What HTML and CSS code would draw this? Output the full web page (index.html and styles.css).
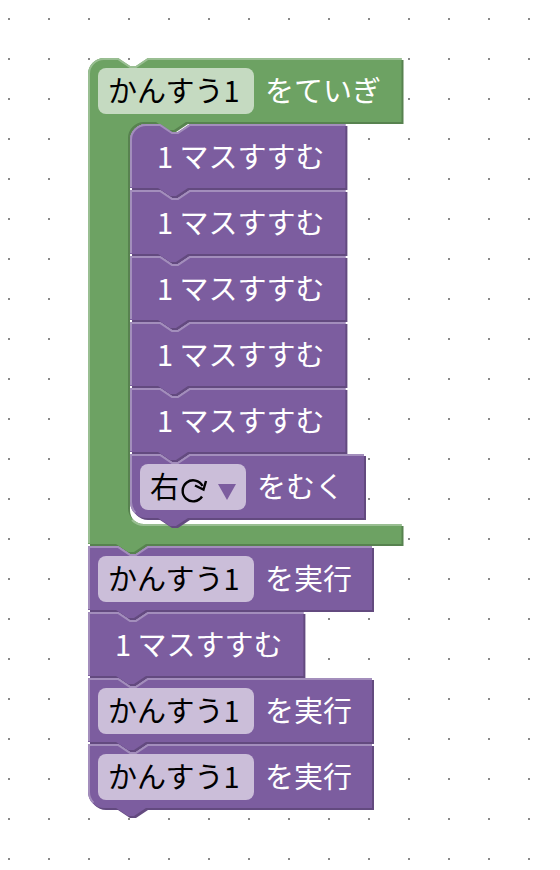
FILE: index.html
```html
<!DOCTYPE html>
<html lang="ja">
<head>
<meta charset="utf-8">
<meta name="viewport" content="width=device-width, initial-scale=1">
<title>ブロック</title>
<link rel="stylesheet" href="styles.css">
</head>
<body>
<svg class="defs" aria-hidden="true">
  <defs>
    <g id="step">
      <path class="dark" transform="translate(2 2)" d="M0 0H30l12 8h6l12-8H215.4V64H58l-12 8h-6l-12-8H0z"/>
      <path class="main" d="M0 0H30l12 8h6l12-8H215.4V64H58l-12 8h-6l-12-8H0z"/>
      <path class="light" d="M1 63V1H30l12 8h6l12-8H215.4"/>
    </g>
    <g id="step-first">
      <path class="dark" transform="translate(2 2)" d="M0 16A16 16 0 0 1 16 0H30l12 8h6l12-8H215.4V64H58l-12 8h-6l-12-8H0z"/>
      <path class="main" d="M0 16A16 16 0 0 1 16 0H30l12 8h6l12-8H215.4V64H58l-12 8h-6l-12-8H0z"/>
      <path class="light" d="M1 63V16A15 15 0 0 1 16 1H30l12 8h6l12-8H215.4"/>
    </g>
    <g id="turn-last">
      <path class="dark" transform="translate(2 2)" d="M0 0H30l12 8h6l12-8H234V64H58l-12 8h-6l-12-8H16A16 16 0 0 1 0 48z"/>
      <path class="main" d="M0 0H30l12 8h6l12-8H234V64H58l-12 8h-6l-12-8H16A16 16 0 0 1 0 48z"/>
      <path class="light" d="M5.4 58.6A15 15 0 0 1 1 48V1H30l12 8h6l12-8H234"/>
    </g>
    <g id="call">
      <path class="dark" transform="translate(2 2)" d="M0 0H30l12 8h6l12-8H284V64H58l-12 8h-6l-12-8H0z"/>
      <path class="main" d="M0 0H30l12 8h6l12-8H284V64H58l-12 8h-6l-12-8H0z"/>
      <path class="light" d="M1 63V1H30l12 8h6l12-8H284"/>
    </g>
    <g id="call-last">
      <path class="dark" transform="translate(2 2)" d="M0 0H30l12 8h6l12-8H284V64H58l-12 8h-6l-12-8H16A16 16 0 0 1 0 48z"/>
      <path class="main" d="M0 0H30l12 8h6l12-8H284V64H58l-12 8h-6l-12-8H16A16 16 0 0 1 0 48z"/>
      <path class="light" d="M5.4 58.6A15 15 0 0 1 1 48V1H30l12 8h6l12-8H284"/>
    </g>
    <g id="define">
      <path class="dark" transform="translate(2 2)" d="M0 16A16 16 0 0 1 16 0H30l12 8h6l12-8H313.5V64H98l-12 8h-6l-12-8H56A16 16 0 0 0 40 80V450A16 16 0 0 0 56 466H313.5V486H58l-12 8h-6l-12-8H0z"/>
      <path class="main" d="M0 16A16 16 0 0 1 16 0H30l12 8h6l12-8H313.5V64H98l-12 8h-6l-12-8H56A16 16 0 0 0 40 80V450A16 16 0 0 0 56 466H313.5V486H58l-12 8h-6l-12-8H0z"/>
      <path class="light" d="M1 485V16A15 15 0 0 1 16 1H30l12 8h6l12-8H313.5M44 462A17 17 0 0 0 56 467H313.5"/>
    </g>
  </defs>
</svg>

<main class="workspace">
  <section class="define green">
    <svg class="shape" aria-hidden="true"><use href="#define"/></svg>
    <div class="row">
      <input class="field" type="text" value="かんすう1" aria-label="関数の名前">
      <span class="label">をていぎ</span>
    </div>
    <div class="body">
      <div class="block purple"><svg class="shape" aria-hidden="true"><use href="#step-first"/></svg><div class="row step"><span class="label">1 マスすすむ</span></div></div>
      <div class="block purple"><svg class="shape" aria-hidden="true"><use href="#step"/></svg><div class="row step"><span class="label">1 マスすすむ</span></div></div>
      <div class="block purple"><svg class="shape" aria-hidden="true"><use href="#step"/></svg><div class="row step"><span class="label">1 マスすすむ</span></div></div>
      <div class="block purple"><svg class="shape" aria-hidden="true"><use href="#step"/></svg><div class="row step"><span class="label">1 マスすすむ</span></div></div>
      <div class="block purple"><svg class="shape" aria-hidden="true"><use href="#step"/></svg><div class="row step"><span class="label">1 マスすすむ</span></div></div>
      <div class="block purple">
        <svg class="shape" aria-hidden="true"><use href="#turn-last"/></svg>
        <div class="row">
          <div class="picker">
            <select class="field turn" aria-label="むき"><option>右</option><option>左</option></select>
            <svg class="picker-icons" viewBox="0 0 106 46" aria-hidden="true">
              <path class="arc" d="M62.5 22A10.5 10.5 0 1 0 62 32.500"/>
              <path class="head" d="M66 17L63.500 25.500L55 21.500"/>
              <path class="caret" d="M78 20H96L87 36z"/>
            </svg>
          </div>
          <span class="label">をむく</span>
        </div>
      </div>
    </div>
  </section>
  <div class="block purple"><svg class="shape" aria-hidden="true"><use href="#call"/></svg><div class="row"><input class="field" type="text" value="かんすう1" aria-label="実行する関数"><span class="label">を実行</span></div></div>
  <div class="block purple"><svg class="shape" aria-hidden="true"><use href="#step"/></svg><div class="row step"><span class="label">1 マスすすむ</span></div></div>
  <div class="block purple"><svg class="shape" aria-hidden="true"><use href="#call"/></svg><div class="row"><input class="field" type="text" value="かんすう1" aria-label="実行する関数"><span class="label">を実行</span></div></div>
  <div class="block purple"><svg class="shape" aria-hidden="true"><use href="#call-last"/></svg><div class="row"><input class="field" type="text" value="かんすう1" aria-label="実行する関数"><span class="label">を実行</span></div></div>
</main>
</body>
</html>
```
FILE: styles.css
```css
* { box-sizing: border-box; }

body {
  margin: 0;
  background: #fff;
  font-family: "Noto Sans CJK JP", sans-serif;
  font-size: 29px;
  line-height: 42px;
}

.workspace {
  min-height: 100vh;
  padding: 58px 0 60px 88px;
  background-image: conic-gradient(from 90deg at 38px 38px, #888 90deg, transparent 0);
  background-size: 40px 40px;
  background-position: 10px 20px;
}

.defs { position: absolute; width: 0; height: 0; }

.green { --main: #6da263; --light: #99be92; --dark: #57824f; --field: #c5dac1; }
.purple { --main: #7c5d9f; --light: #a38ebc; --dark: #634a7f; --field: #cbbed9; }

.define, .block { position: relative; }

.shape {
  position: absolute;
  top: 0;
  left: 0;
  width: 100%;
  height: 100%;
  overflow: visible;
}

.dark { fill: var(--dark); }
.main { fill: var(--main); }
.light { fill: none; stroke: var(--light); stroke-width: 2; }

.row {
  position: relative;
  display: flex;
  align-items: center;
  gap: 11px;
  height: 66px;
  padding: 0 10px;
  color: #fff;
  white-space: pre;
}

.label { padding-bottom: 4px; }

.step { padding-left: 27px; }

.body { padding: 0 0 26px 42px; }

.field {
  width: 156px;
  height: 46px;
  margin: 0;
  padding: 0 10px 4px;
  border: 0;
  border-radius: 8px;
  outline: 0;
  appearance: none;
  background: var(--field);
  color: #000;
  font: inherit;
}

.picker { position: relative; display: flex; }
.turn { width: 106px; }

.picker-icons {
  position: absolute;
  inset: 0;
  pointer-events: none;
}

.arc, .head { fill: none; stroke: #000; stroke-width: 2.4; }
.caret { fill: var(--main); }
```
